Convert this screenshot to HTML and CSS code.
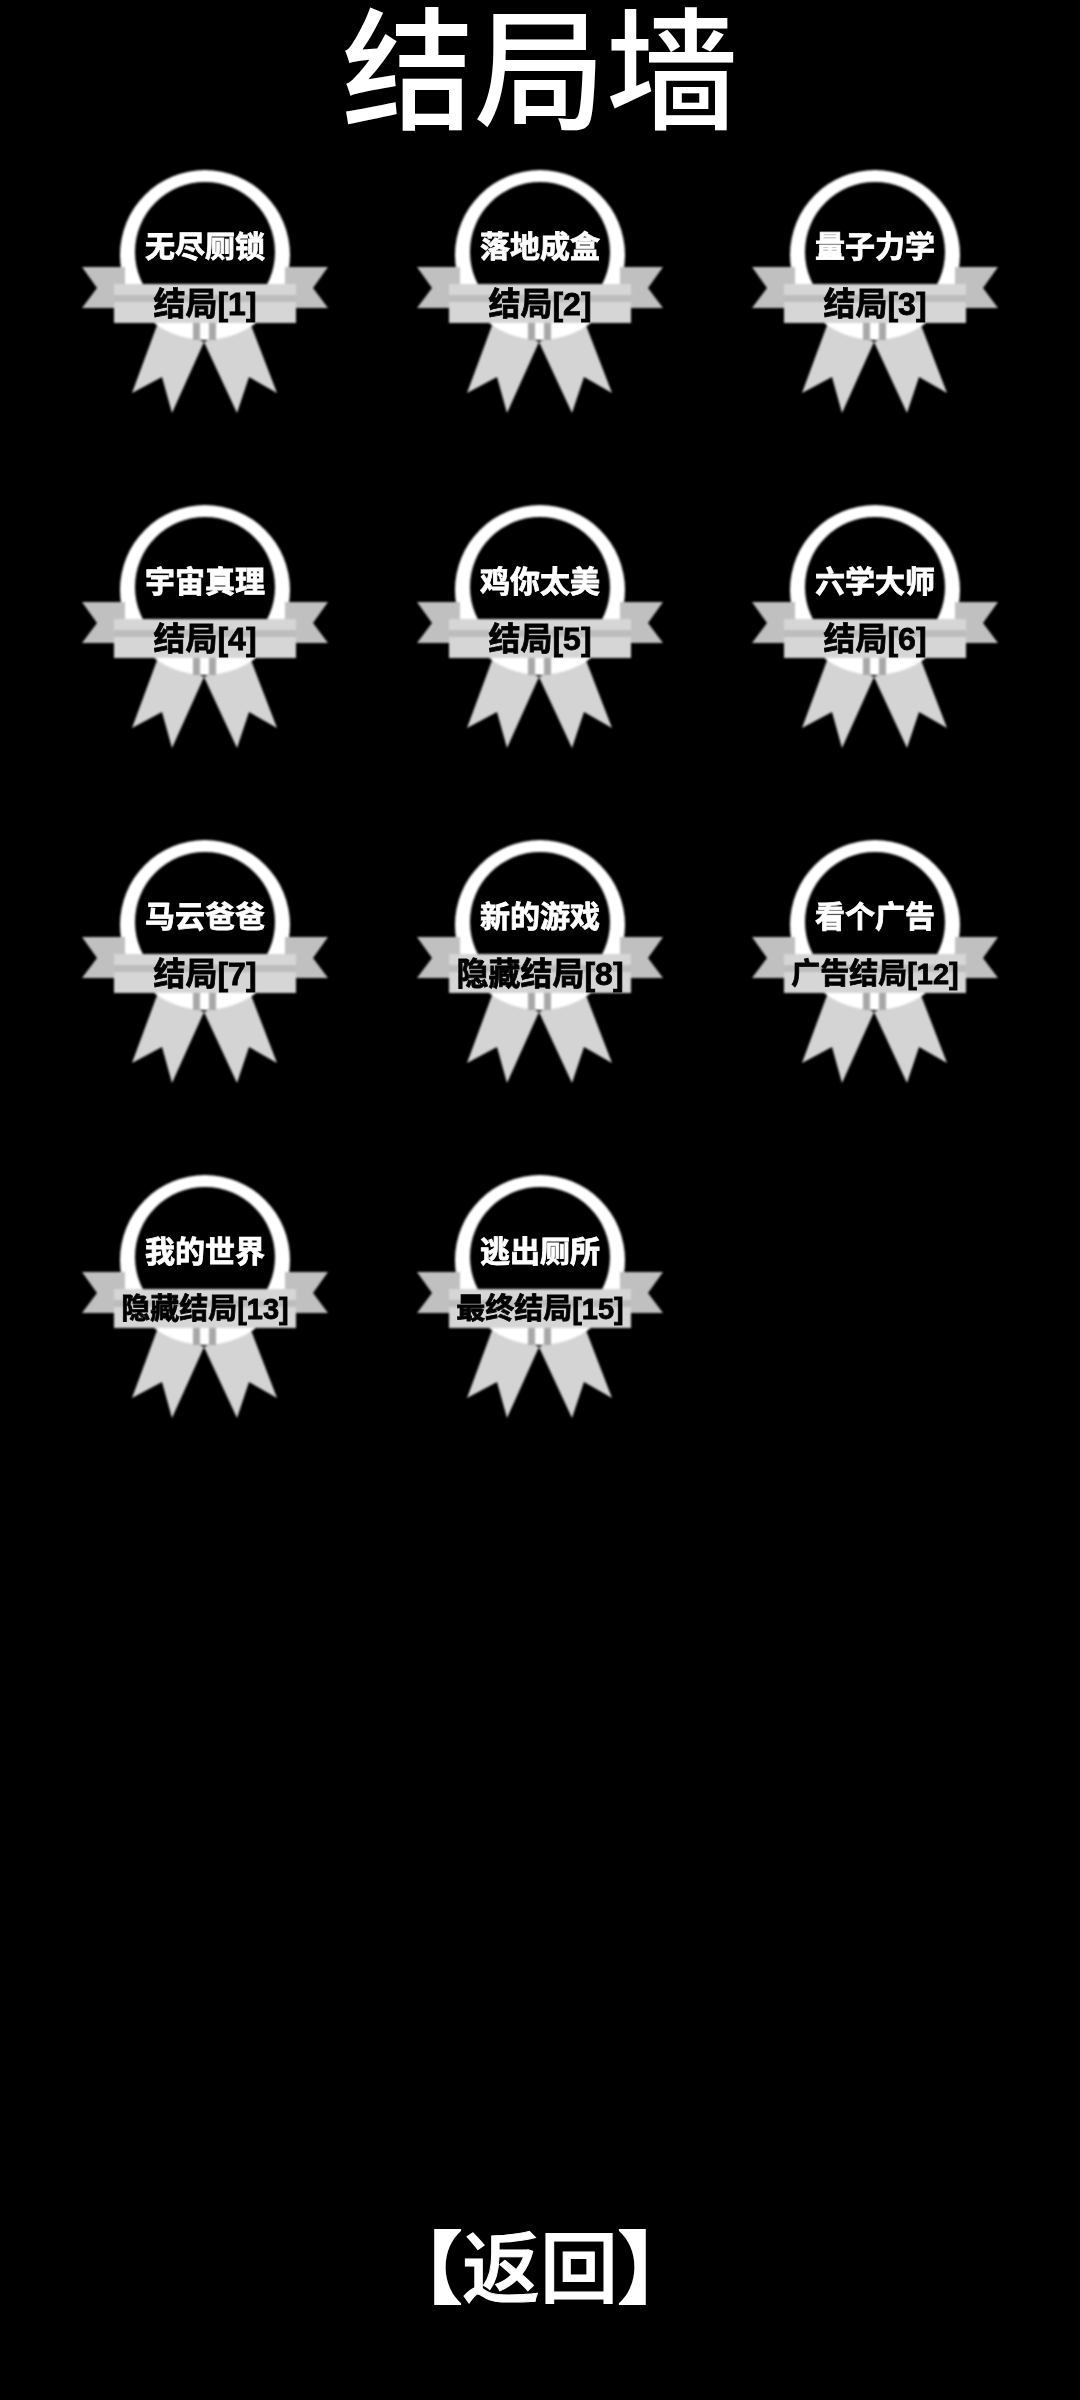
FILE: index.html
```html
<!DOCTYPE html>
<html lang="zh">
<head>
<meta charset="utf-8">
<title>结局墙</title>
<link rel="stylesheet" href="styles.css">
</head>
<body>
<svg class="defs" width="0" height="0" aria-hidden="true">
  <symbol id="medal" viewBox="0 0 260 250">
    <polygon class="tail" points="84,150 129,172 97,243 87,207 57,223"/>
    <polygon class="tail" points="174,150 129,172 162,243 174,207 202,223"/>
    <path class="ring" fill-rule="evenodd" d="M45 85a85 85 0 1 0 170 0a85 85 0 1 0 -170 0ZM60 82a70 70 0 1 0 140 0a70 70 0 1 0 -140 0Z"/>
    <rect class="pin" x="118" y="153" width="7" height="17"/>
    <rect class="pin" x="134" y="153" width="7" height="17"/>
    <polygon class="flag" points="7,97 50,97 50,138 7,138 22,118"/>
    <polygon class="flag" points="253,97 210,97 210,138 253,138 238,118"/>
    <rect class="band" x="39" y="114" width="182" height="39"/>
    <rect class="band-mid" x="39" y="125" width="182" height="7"/>
  </symbol>
</svg>
<main class="page">
  <h1 class="title">结局墙</h1>
  <section class="wall">
    <article class="badge"><svg class="medal"><use href="#medal"/></svg><p class="name">无尽厕锁</p><p class="label">结局[1]</p></article>
    <article class="badge"><svg class="medal"><use href="#medal"/></svg><p class="name">落地成盒</p><p class="label">结局[2]</p></article>
    <article class="badge"><svg class="medal"><use href="#medal"/></svg><p class="name">量子力学</p><p class="label">结局[3]</p></article>
    <article class="badge"><svg class="medal"><use href="#medal"/></svg><p class="name">宇宙真理</p><p class="label">结局[4]</p></article>
    <article class="badge"><svg class="medal"><use href="#medal"/></svg><p class="name">鸡你太美</p><p class="label">结局[5]</p></article>
    <article class="badge"><svg class="medal"><use href="#medal"/></svg><p class="name">六学大师</p><p class="label">结局[6]</p></article>
    <article class="badge"><svg class="medal"><use href="#medal"/></svg><p class="name">马云爸爸</p><p class="label">结局[7]</p></article>
    <article class="badge"><svg class="medal"><use href="#medal"/></svg><p class="name">新的游戏</p><p class="label">隐藏结局[8]</p></article>
    <article class="badge"><svg class="medal"><use href="#medal"/></svg><p class="name">看个广告</p><p class="label label-fit">广告结局[12]</p></article>
    <article class="badge"><svg class="medal"><use href="#medal"/></svg><p class="name">我的世界</p><p class="label label-fit">隐藏结局[13]</p></article>
    <article class="badge"><svg class="medal"><use href="#medal"/></svg><p class="name">逃出厕所</p><p class="label label-fit">最终结局[15]</p></article>
  </section>
  <button class="back" type="button"><span class="bracket">【</span>返回<span class="bracket">】</span></button>
</main>
</body>
</html>
```
FILE: styles.css
```css
* { box-sizing: border-box; }
html, body { margin: 0; background: #000; }
.defs { position: absolute; }
.page {
  height: 2400px;
  display: flex;
  flex-direction: column;
  align-items: center;
  font-family: "Liberation Sans", "Noto Sans CJK SC", sans-serif;
}
.title {
  margin: 0;
  height: 170px;
  font-size: 132px;
  line-height: 148px;
  font-weight: 500;
  color: #fff;
}
.wall {
  display: grid;
  grid-template-columns: repeat(3, 335px);
  grid-auto-rows: 335px;
  width: 1005px;
}
.badge {
  position: relative;
  justify-self: center;
  width: 260px;
  height: 250px;
  margin: 0;
}
.medal { display: block; width: 260px; height: 250px; filter: blur(0.8px); }
.tail { fill: #d4d4d4; }
.ring { fill: #fff; }
.pin { fill: #a8a8a8; }
.flag { fill: #c0c0c0; }
.band { fill: #d6d6d6; }
.band-mid { fill: #bdbdbd; }
.name, .label {
  position: absolute;
  left: 0;
  right: 0;
  margin: 0;
  text-align: center;
  line-height: 40px;
  font-weight: 700;
  white-space: nowrap;
  -webkit-text-stroke: 0.8px currentColor;
  filter: blur(0.6px);
}
.name { top: 57px; color: #fff; font-size: 30px; }
.label { top: 114px; color: #000; font-size: 32px; }
.label-fit { font-size: 29px; }
.back {
  margin-top: auto;
  margin-bottom: 88px;
  padding: 0;
  border: 0;
  background: none;
  color: #fff;
  font-family: "Liberation Sans", "Noto Sans CJK SC", sans-serif;
  font-size: 78px;
  line-height: 84px;
  font-weight: 500;
  -webkit-text-stroke: 1px currentColor;
}
.bracket { font-weight: 900; -webkit-text-stroke: 2px currentColor; }
```
